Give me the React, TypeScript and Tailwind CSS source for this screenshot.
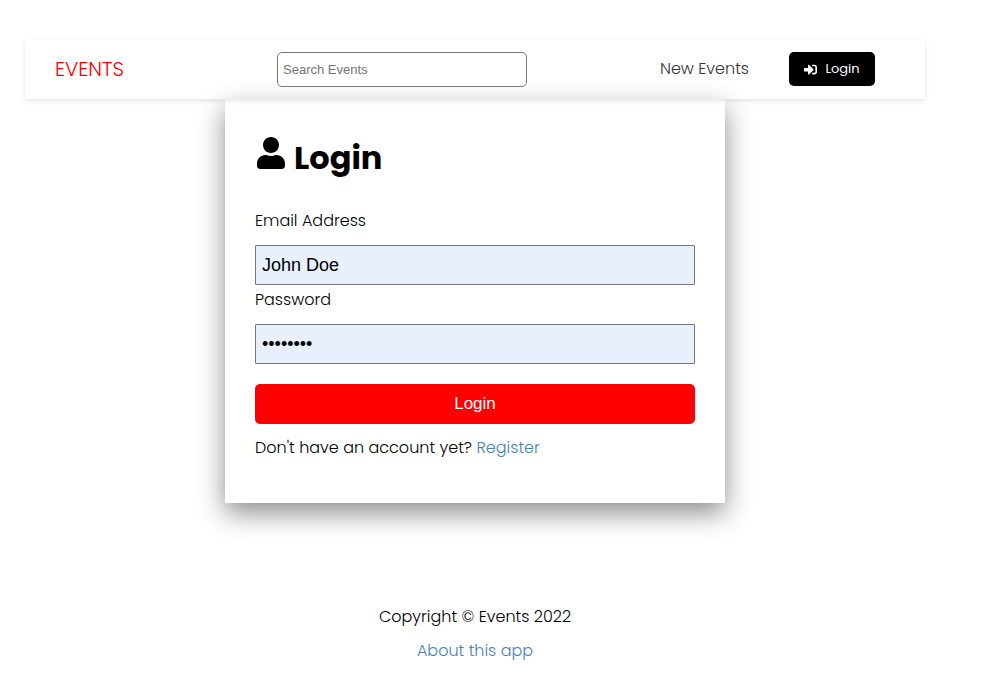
import React from "react";
import { FaUser, FaSignInAlt } from "react-icons/fa";

export default function App() {
  return (
    <div className="min-h-screen bg-white pt-[39px] pr-[57px] pl-[25px] font-['Poppins','Inter',sans-serif] text-base leading-6 font-light text-black">
      <header className="relative z-10 flex h-[60px] items-center justify-between pr-[50px] pl-[30px] shadow-[0_2px_5px_rgba(0,0,0,0.1)]">
        <a href="#home" className="w-[222px] text-xl text-[#ff0000]">
          EVENTS
        </a>
        <form>
          <input
            type="text"
            aria-label="Search Events"
            placeholder="Search Events"
            className="h-[35px] w-[250px] rounded-[5px] border border-[#767676] bg-white px-[5px] font-['Liberation_Sans',sans-serif] text-[13px] font-normal placeholder:text-[#757575]"
          />
        </form>
        <nav className="flex flex-1 items-center justify-end gap-10">
          <a href="#events" className="text-[#333333]">
            New Events
          </a>
          <button
            type="button"
            className="flex h-[34px] w-[86px] items-center justify-center gap-2 rounded-[5px] bg-black text-[13px] font-normal text-white"
          >
            <FaSignInAlt aria-hidden="true" />
            Login
          </button>
        </nav>
      </header>

      <main>
        <section className="mx-auto max-w-[500px] bg-white px-[30px] pt-[35px] pb-[43px] shadow-[0_10px_25px_rgba(0,0,0,0.45)]">
          <h1 className="mb-[27px] flex h-12 items-center gap-[7px] text-[32px] font-bold">
            <FaUser aria-hidden="true" className="mb-[10px]" />
            Login
          </h1>
          <form>
            <label htmlFor="email" className="block">
              Email Address
            </label>
            <input
              id="email"
              type="text"
              defaultValue="John Doe"
              className="mt-3 block h-10 w-full rounded-[1px] border border-[#767676] bg-[#e8f0fe] px-[6px] font-['Liberation_Sans',sans-serif] text-lg font-normal"
            />
            <label htmlFor="password" className="mt-[3px] block">
              Password
            </label>
            <input
              id="password"
              type="password"
              defaultValue="password"
              className="mt-3 block h-10 w-full rounded-[1px] border border-[#767676] bg-[#e8f0fe] px-[6px] font-['Liberation_Sans',sans-serif] text-lg font-normal"
            />
            <button
              type="button"
              className="mt-5 block h-10 w-full rounded-[5px] bg-[#ff0000] font-['Liberation_Sans',sans-serif] text-[17px] font-normal text-white"
            >
              Login
            </button>
          </form>
          <p className="mt-3">
            Don't have an account yet?{" "}
            <a href="#register" className="text-[#4682b4]">
              Register
            </a>
          </p>
        </section>
      </main>

      <footer className="mt-[102px] flex flex-col items-center gap-[10px]">
        <p>Copyright © Events 2022</p>
        <a href="#about" className="text-[#4682b4]">
          About this app
        </a>
      </footer>
    </div>
  );
}
